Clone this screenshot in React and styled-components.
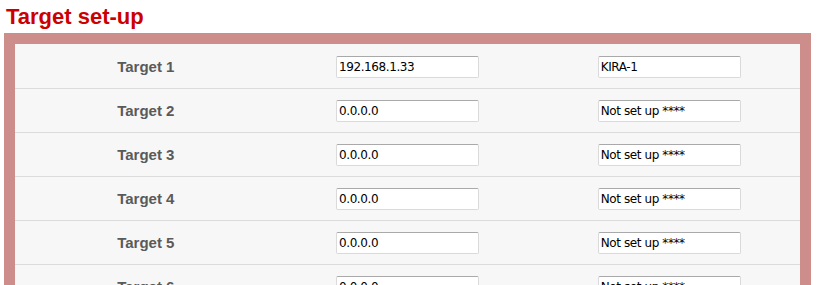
import React from 'react';
import styled, { createGlobalStyle } from 'styled-components';

const GlobalStyle = createGlobalStyle`
	body {
		margin: 0;
		background: #fff;
		font-family: 'Liberation Sans', Arial, sans-serif;
	}
`;

const Page = styled.div`
	padding: 4px 11px 0 4px;
`;

const Title = styled.h1`
	margin: 0 0 4px 2px;
	font-size: 22px;
	line-height: 25px;
	font-weight: bold;
	color: #cc0000;
`;

const Frame = styled.div`
	background: #cd8d8b;
	padding: 11px;
`;

const Panel = styled.div`
	background: #f7f7f7;
	padding-top: 1px;
`;

const Row = styled.div`
	display: grid;
	grid-template-columns: 1fr 1fr 1fr;
	align-items: center;
	height: 43px;
	border-bottom: 1px solid #dcdcdc;
`;

const Label = styled.div`
	text-align: center;
	font-size: 15px;
	font-weight: bold;
	color: #5a5a5a;
`;

const Cell = styled.div`
	display: flex;
	justify-content: center;
`;

const Field = styled.input`
	box-sizing: border-box;
	width: 143px;
	height: 22px;
	padding: 0 2px;
	border: 1px solid #dadada;
	border-top-color: #a9a9a9;
	border-radius: 2px;
	background: #fff;
	font-family: 'DejaVu Sans', Tahoma, sans-serif;
	font-size: 12px;
	letter-spacing: -0.4px;
	color: #000;
	outline: none;
`;

const targets = [
	{ ip: '192.168.1.33', name: 'KIRA-1' },
	{ ip: '0.0.0.0', name: 'Not set up ****' },
	{ ip: '0.0.0.0', name: 'Not set up ****' },
	{ ip: '0.0.0.0', name: 'Not set up ****' },
	{ ip: '0.0.0.0', name: 'Not set up ****' },
	{ ip: '0.0.0.0', name: 'Not set up ****' },
	{ ip: '0.0.0.0', name: 'Not set up ****' },
	{ ip: '0.0.0.0', name: 'Not set up ****' },
];

const App = () => (
	<>
		<GlobalStyle />
		<Page>
			<Title>Target set-up</Title>
			<Frame>
				<Panel>
					{targets.map((t, i) => (
						<Row key={i}>
							<Label>Target {i + 1}</Label>
							<Cell>
								<Field defaultValue={t.ip} />
							</Cell>
							<Cell>
								<Field defaultValue={t.name} />
							</Cell>
						</Row>
					))}
				</Panel>
			</Frame>
		</Page>
	</>
);

export default App;
